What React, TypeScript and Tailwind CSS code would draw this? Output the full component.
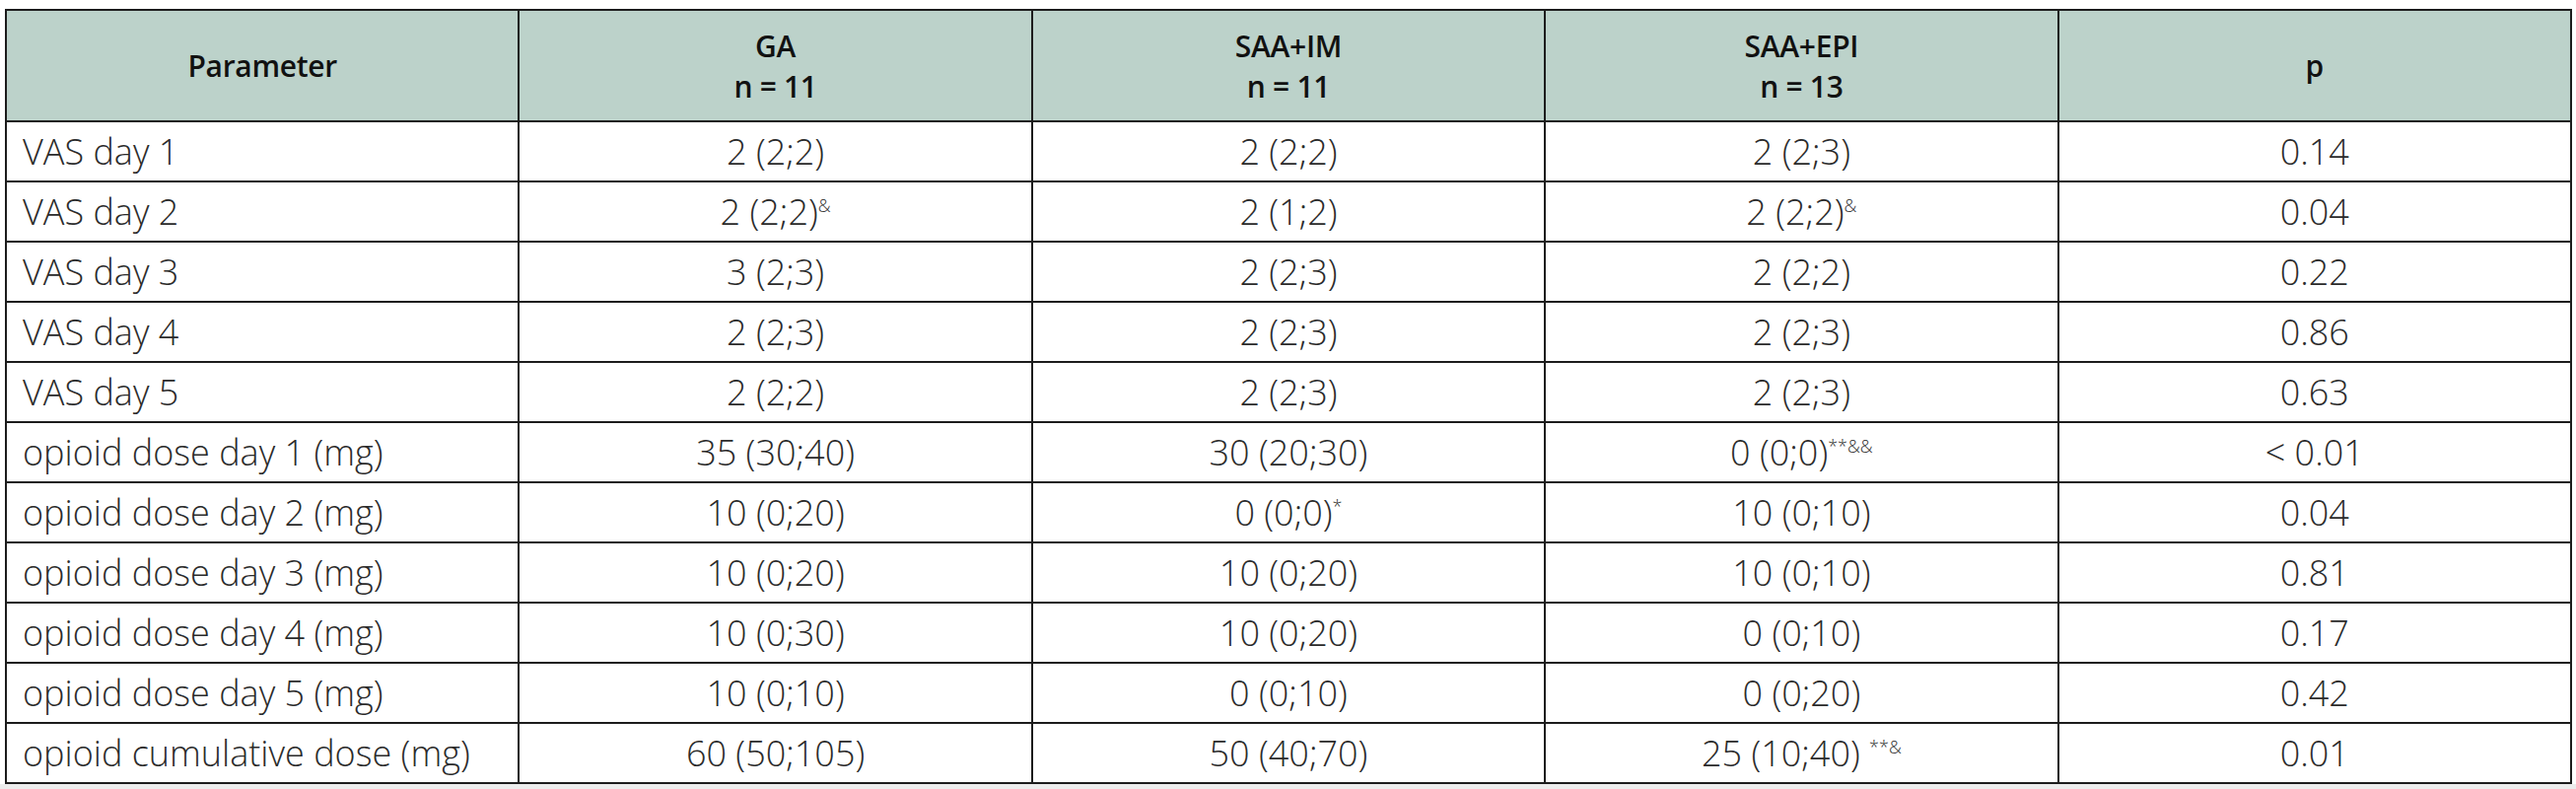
const rows: { label: string; ga: string; gaSup?: string; im: string; imSup?: string; epi: string; epiSup?: string; p: string }[] = [
  { label: "VAS day 1", ga: "2 (2;2)", im: "2 (2;2)", epi: "2 (2;3)", p: "0.14" },
  { label: "VAS day 2", ga: "2 (2;2)", gaSup: "&", im: "2 (1;2)", epi: "2 (2;2)", epiSup: "&", p: "0.04" },
  { label: "VAS day 3", ga: "3 (2;3)", im: "2 (2;3)", epi: "2 (2;2)", p: "0.22" },
  { label: "VAS day 4", ga: "2 (2;3)", im: "2 (2;3)", epi: "2 (2;3)", p: "0.86" },
  { label: "VAS day 5", ga: "2 (2;2)", im: "2 (2;3)", epi: "2 (2;3)", p: "0.63" },
  { label: "opioid dose day 1 (mg)", ga: "35 (30;40)", im: "30 (20;30)", epi: "0 (0;0)", epiSup: "**&&", p: "< 0.01" },
  { label: "opioid dose day 2 (mg)", ga: "10 (0;20)", im: "0 (0;0)", imSup: "*", epi: "10 (0;10)", p: "0.04" },
  { label: "opioid dose day 3 (mg)", ga: "10 (0;20)", im: "10 (0;20)", epi: "10 (0;10)", p: "0.81" },
  { label: "opioid dose day 4 (mg)", ga: "10 (0;30)", im: "10 (0;20)", epi: "0 (0;10)", p: "0.17" },
  { label: "opioid dose day 5 (mg)", ga: "10 (0;10)", im: "0 (0;10)", epi: "0 (0;20)", p: "0.42" },
  { label: "opioid cumulative dose (mg)", ga: "60 (50;105)", im: "50 (40;70)", epi: "25 (10;40) ", epiSup: "**&", p: "0.01" },
];

function Val({ v, sup }: { v: string; sup?: string }) {
  return (
    <>
      {v}
      {sup && <span className="text-[18px] align-[13px] leading-none">{sup}</span>}
    </>
  );
}

export default function App() {
  const head = "border-2 border-[#1c1c1c] font-semibold text-[#111] text-center";
  const cell = "border-2 border-[#1c1c1c] h-[61px] text-center";

  return (
    <div
      className="w-[2613px] h-[800px] bg-white pt-[9px] flex flex-col"
      style={{ fontFamily: '"Open Sans", "Liberation Sans", sans-serif' }}
    >
      <div className="px-[5px]">
        <table className="w-[2604px] border-collapse table-fixed text-[36px] font-light text-[#2b2b2b]">
          <thead>
            <tr className="bg-[#bcd2ca] h-[113px] text-[30px] leading-[41px] tracking-[-0.01em]">
              <th className={head}>Parameter</th>
              <th className={head}>
                GA
                <br />n = 11
              </th>
              <th className={head}>
                SAA+IM
                <br />n = 11
              </th>
              <th className={head}>
                SAA+EPI
                <br />n = 13
              </th>
              <th className={head}>p</th>
            </tr>
          </thead>
          <tbody>
            {rows.map((r) => (
              <tr key={r.label}>
                <td className="border-2 border-[#1c1c1c] h-[61px] pl-[16px] text-left whitespace-nowrap">{r.label}</td>
                <td className={cell}>
                  <Val v={r.ga} sup={r.gaSup} />
                </td>
                <td className={cell}>
                  <Val v={r.im} sup={r.imSup} />
                </td>
                <td className={cell}>
                  <Val v={r.epi} sup={r.epiSup} />
                </td>
                <td className={cell}>{r.p}</td>
              </tr>
            ))}
          </tbody>
        </table>
      </div>
      <div className="flex-1 bg-[#ececec]" />
    </div>
  );
}
